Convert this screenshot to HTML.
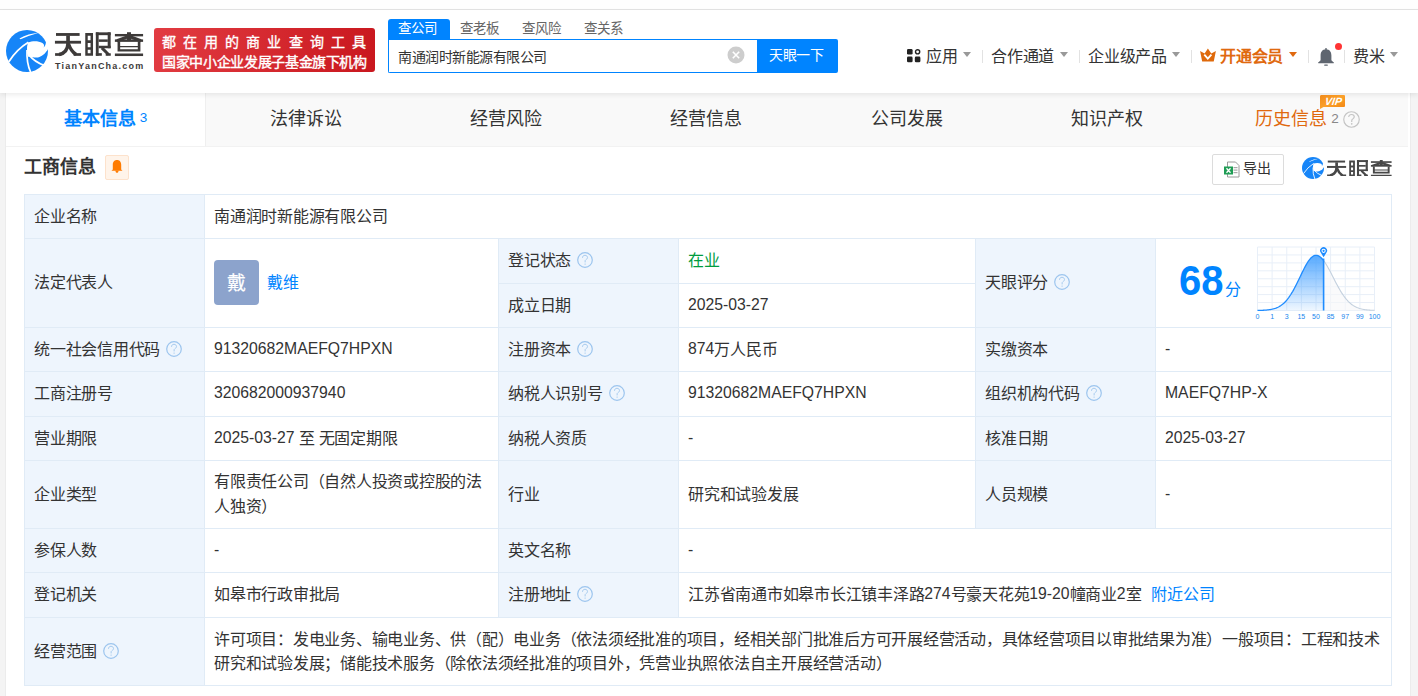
<!DOCTYPE html>
<html lang="zh-CN"><head><meta charset="utf-8"><style>
*{margin:0;padding:0;box-sizing:border-box}
html,body{width:1418px;height:696px;overflow:hidden}
body{background:#f4f4f4;font-family:"Liberation Sans",sans-serif;color:#333;position:relative}
.a{position:absolute;white-space:nowrap}
#topstrip{position:absolute;left:0;top:0;width:1418px;height:9px;background:#fefefe}
#topline{position:absolute;left:0;top:9px;width:1418px;height:1px;background:#e4e4e4}
#header{position:absolute;left:0;top:10px;width:1418px;height:83px;background:#fff;z-index:3;box-shadow:0 2px 5px rgba(0,0,0,0.08)}
.nav{font-size:16px;letter-spacing:-0.25px;line-height:20px;color:#333;top:37px}
.caret{position:absolute;width:0;height:0;border-left:4px solid transparent;border-right:4px solid transparent;border-top:5px solid #999}
.sep{position:absolute;width:1px;height:13px;background:#e2e2e2;top:40px}
#card{position:absolute;left:5px;top:93px;width:1406px;height:603px;background:#fff;border-left:1px solid #ececec;border-right:1px solid #ececec}
.tab{position:absolute;top:0;height:54px;background:#f9f9f9;font-size:18px;line-height:52px;text-align:center;color:#333;border-bottom:1px solid #f2f2f2;white-space:nowrap}
.tab.act{background:#fff;color:#0084ff;font-weight:bold;line-height:50px;border-right:1px solid #efefef}
.c{position:absolute;border-left:1px solid #e0ebf6;border-top:1px solid #e0ebf6;font-size:16px;letter-spacing:-0.25px;display:flex;align-items:center;padding-left:9px;color:#333;white-space:nowrap}
.c>div{line-height:20px}
.l{background:#eef5fd}
.d{font-size:15.75px;letter-spacing:0;position:relative;top:-1px}
.q{display:inline-block;width:16px;height:16px;margin-left:6px;vertical-align:-2px}
</style></head><body>
<div id="topstrip"></div><div id="topline"></div>
<div id="header">
<svg class="a" style="left:2px;top:16px" width="50" height="50" viewBox="0 0 50 50"><circle cx="25" cy="25" r="21" fill="#1685f8"/>
<path d="M17.4,12.4 Q26,7.6 36.8,6.8 Q27,9.6 18.6,13.3 Z" fill="#fff"/>
<path d="M6.8,35.8 Q14.5,23.5 26.4,16.3" fill="none" stroke="#fff" stroke-width="1.7"/>
<path d="M26.2,16.5 C30,15 36,14.6 40.4,16.9 C42.4,18 42.6,20.3 41.4,21.5 C42.8,20.8 43.8,18.6 43.9,16.3 L49,14 L49,23 L46,23 C45.6,24.2 45,25 44.5,25.3 C43,27.5 41.5,28.8 40.2,29.5 C38.5,30.8 36.5,31.6 34.5,31.6 C32,31.7 30,31.2 28.4,30.5 L26.4,31 L25.1,27 L25.3,25.5 C24.7,22.5 25,19 26.2,16.5 Z" fill="#fff"/>
<path d="M25.0,24 Q24.4,37 28.6,46" fill="none" stroke="#fff" stroke-width="1.7"/>
<path d="M27.6,29.6 Q32.5,35.6 42,39.4" fill="none" stroke="#fff" stroke-width="1.7"/></svg>
<svg class="a" style="left:50px;top:16px" width="100" height="34" viewBox="0 0 1418 482"><g fill="#3d3a39">
<rect x="85" y="100" width="335" height="40"/>
<rect x="70" y="210" width="370" height="40"/>
<rect x="230" y="135" width="52" height="120"/>
<rect x="72" y="385" width="90" height="38"/>
<rect x="335" y="385" width="105" height="38"/>
</g><g fill="none" stroke="#3d3a39" stroke-width="50">
<path d="M256,245 C252,320 210,385 130,404"/>
<path d="M262,255 C285,320 315,370 370,404"/>
</g><g fill="#3d3a39">
<path fill-rule="evenodd" d="M500,100 H610 V422 H500 Z M535,137 V203 H575 V137 Z M535,240 V300 H575 V240 Z M535,335 V387 H575 V335 Z"/>
<rect x="650" y="90" width="40" height="332"/>
<rect x="650" y="90" width="210" height="40"/>
<rect x="818" y="90" width="42" height="225"/>
<rect x="690" y="190" width="130" height="35"/>
<rect x="690" y="280" width="170" height="35"/>
<rect x="650" y="385" width="85" height="37"/>
<rect x="790" y="387" width="72" height="35"/>
</g><path d="M735,310 L830,405" stroke="#3d3a39" stroke-width="42" fill="none"/>
<g fill="#3d3a39">
<rect x="1092" y="88" width="56" height="110"/>
<rect x="920" y="113" width="400" height="34"/>
<rect x="920" y="190" width="400" height="35"/>
<path fill-rule="evenodd" d="M958,225 H1282 V362 H958 Z M995,225 V282 H1245 V225 Z M995,302 V328 H1245 V302 Z"/>
<rect x="920" y="390" width="400" height="36"/>
</g><g fill="none" stroke="#3d3a39" stroke-width="44">
<path d="M1105,152 L950,208"/><path d="M1135,152 L1290,208"/>
</g></svg>
<div class="a" style="left:55px;top:50px;font-size:9px;line-height:12px;font-weight:bold;color:#3d3a39;letter-spacing:1.22px">TianYanCha.com</div>
<div class="a" style="left:154px;top:18px;width:221px;height:44px;border-radius:3px;background:linear-gradient(100deg,#e23c42,#c9171e)"></div>
<div class="a" style="left:162px;top:23px;font-size:14px;line-height:18px;font-weight:normal;-webkit-text-stroke:0.35px #fff;color:#fff;letter-spacing:7.1px">都在用的商业查询工具</div>
<div class="a" style="left:162px;top:43px;font-size:14px;line-height:18px;font-weight:normal;-webkit-text-stroke:0.4px #fff;color:#fff;letter-spacing:-0.35px">国家中小企业发展子基金旗下机构</div>
<div class="a" style="left:388px;top:9px;width:62px;height:21px;background:#0084ff;border-radius:3px 3px 0 0"></div>
<div class="a" style="left:398px;top:10px;font-size:13.5px;line-height:18px;color:#fff">查公司</div>
<div class="a" style="left:460px;top:10px;font-size:13.5px;line-height:18px;color:#666">查老板</div>
<div class="a" style="left:522px;top:10px;font-size:13.5px;line-height:18px;color:#666">查风险</div>
<div class="a" style="left:584px;top:10px;font-size:13.5px;line-height:18px;color:#666">查关系</div>
<div class="a" style="left:388px;top:29px;width:370px;height:34px;border:1px solid #0084ff;border-right:none;background:#fff;border-radius:0 0 0 2px"></div>
<div class="a" style="left:398px;top:38px;font-size:14px;letter-spacing:-0.5px;line-height:18px;color:#333">南通润时新能源有限公司</div>
<svg class="a" style="left:727px;top:36px" width="18" height="18" viewBox="0 0 18 18"><circle cx="9" cy="9" r="8.5" fill="#cdcdcd"/><path d="M5.8,5.8 L12.2,12.2 M12.2,5.8 L5.8,12.2" stroke="#fff" stroke-width="1.6"/></svg>
<div class="a" style="left:757px;top:29px;width:81px;height:34px;background:#0084ff;border-radius:0 2px 2px 0"></div>
<div class="a" style="left:769px;top:36px;font-size:14px;letter-spacing:-0.4px;line-height:18px;color:#fff">天眼一下</div>
<svg class="a" style="left:907px;top:39px" width="14" height="14" viewBox="0 0 14 14">
<rect x="0" y="0" width="5.6" height="5.6" rx="1.3" fill="#222"/>
<circle cx="10.6" cy="2.8" r="2.1" fill="none" stroke="#222" stroke-width="1.4"/>
<rect x="0" y="7.6" width="5.6" height="5.6" rx="1.3" fill="#222"/>
<rect x="7.8" y="7.6" width="5.6" height="5.6" rx="1.3" fill="#222"/>
</svg>
<div class="a nav" style="left:926px;color:#333;font-weight:normal">应用</div>
<div class="caret" style="left:963px;top:42px;border-top-color:#999"></div>
<div class="sep" style="left:982px"></div>
<div class="a nav" style="left:991px;color:#333;font-weight:normal">合作通道</div>
<div class="caret" style="left:1060px;top:42px;border-top-color:#999"></div>
<div class="sep" style="left:1079px"></div>
<div class="a nav" style="left:1088px;color:#333;font-weight:normal">企业级产品</div>
<div class="caret" style="left:1172px;top:42px;border-top-color:#999"></div>
<div class="sep" style="left:1191px"></div>
<svg class="a" style="left:1199px;top:38px" width="18" height="15" viewBox="0 0 18 15">
<path d="M1.1,3 L5.6,5.6 L8.9,0.4 L12.3,5.6 L16.9,3 L14.8,13.2 Q14.6,13.6 14.2,13.6 L3.6,13.6 Q3.2,13.6 3.1,13.2 Z" fill="#df6a0c"/>
<path d="M5.3,6.6 L8.8,10.6 L12.4,6.6" fill="none" stroke="#fff" stroke-width="1.8"/>
</svg>
<div class="a nav" style="left:1220px;color:#e0690f;font-weight:bold">开通会员</div>
<div class="caret" style="left:1289px;top:42px;border-top-color:#e0690f"></div>
<div class="sep" style="left:1308px"></div>
<svg class="a" style="left:1317px;top:37px" width="18" height="20" viewBox="0 0 18 20">
<rect x="8.3" y="1" width="1.4" height="2" rx="0.6" fill="#5f6670"/>
<path d="M9,2.3 C5.2,2.3 3.6,5.3 3.6,8.4 L3.6,13.2 L1.6,15.3 L16.4,15.3 L14.4,13.2 L14.4,8.4 C14.4,5.3 12.8,2.3 9,2.3 Z" fill="#5f6670"/>
<rect x="1.2" y="15" width="15.6" height="1.2" rx="0.5" fill="#5f6670"/>
<rect x="7.2" y="17.4" width="3.6" height="1.3" rx="0.5" fill="#5f6670"/>
</svg>
<div class="a" style="left:1334.5px;top:32.5px;width:7.5px;height:7.5px;border-radius:50%;background:#ff3434"></div>
<div class="sep" style="left:1344px"></div>
<div class="a nav" style="left:1353px;color:#333;font-weight:normal">费米</div>
<div class="caret" style="left:1390px;top:42px;border-top-color:#999"></div>
</div>
<div id="card">
<div class="tab act" style="left:0.00px;width:200px">基本信息<span style="font-size:13.5px;font-weight:normal;margin-left:4px;vertical-align:3px">3</span></div>
<div class="tab" style="left:200.14px;width:200.14px">法律诉讼</div>
<div class="tab" style="left:400.29px;width:200.14px">经营风险</div>
<div class="tab" style="left:600.43px;width:200.14px">经营信息</div>
<div class="tab" style="left:800.57px;width:200.14px">公司发展</div>
<div class="tab" style="left:1000.71px;width:200.14px">知识产权</div>
<div class="tab" style="left:1200.86px;width:201.14px;color:#e0690f">历史信息<span style="font-size:13.5px;color:#888;margin-left:4px;vertical-align:2px">2</span><svg style="display:inline-block;vertical-align:-3px;margin-left:4px" width="17" height="17" viewBox="0 0 16 16"><circle cx="8" cy="8" r="7.3" fill="none" stroke="#c4c4c4" stroke-width="1.1"/><path d="M5.4,5.7 C5.4,4.1 6.6,3.3 8,3.3 C9.5,3.3 10.6,4.2 10.6,5.5 C10.6,6.9 9.1,7.3 8.3,8.4 L8.2,10.3" fill="none" stroke="#c4c4c4" stroke-width="1.1"/><circle cx="8.2" cy="12.1" r="0.8" fill="#c4c4c4"/></svg></div>
</div>
<svg class="a" style="left:1319px;top:95px;z-index:4" width="27" height="14" viewBox="0 0 27 14">
<defs><linearGradient id="vg" x1="0" y1="0" x2="1" y2="1"><stop offset="0" stop-color="#f08a1a"/><stop offset="0.5" stop-color="#fba02a"/><stop offset="1" stop-color="#f28410"/></linearGradient></defs>
<path d="M2,0 L25,0 Q26,0 26,1.2 L26,11 Q26,12 25,12 L4.5,12 L1,14 L1,1.5 Q1,0 2,0 Z" fill="url(#vg)"/>
<text x="14" y="10.2" font-family="Liberation Sans" font-size="10.5" font-weight="bold" font-style="italic" fill="#fff" text-anchor="middle" transform="skewX(-8) translate(1.5,0)">VIP</text>
</svg>
<div class="a" style="left:24px;top:155px;font-size:18px;line-height:24px;font-weight:bold;color:#333">工商信息</div>
<div class="a" style="left:105px;top:155px;width:24px;height:25px;background:#fff4ea;border:1px solid #fde2cc;border-radius:2px"></div>
<svg class="a" style="left:111px;top:159px" width="12" height="15" viewBox="0 0 12 15">
<path d="M6,1 C3,1 1.8,3.2 1.8,5.8 L1.8,10.6 L0.5,11.8 L11.5,11.8 L10.2,10.6 L10.2,5.8 C10.2,3.2 9,1 6,1 Z" fill="#ff7b00"/>
<path d="M4.3,11.5 L7.7,11.5 Q7.4,13.8 6,13.9 Q4.6,13.8 4.3,11.5 Z" fill="#ff7b00"/>
</svg>
<div class="a" style="left:1212px;top:154px;width:72px;height:31px;border:1px solid #dcdcdc;border-radius:2px;background:#fff"></div>
<svg class="a" style="left:1224px;top:161px" width="16" height="17" viewBox="0 0 16 17">
<path d="M3.5,1 L11.5,1 L15,4.5 L15,16 L3.5,16 Z" fill="#fff" stroke="#9a9a9a" stroke-width="1"/>
<rect x="9.5" y="6" width="4" height="1.2" fill="#aaa"/><rect x="9.5" y="8.5" width="4" height="1.2" fill="#aaa"/><rect x="9.5" y="11" width="4" height="1.2" fill="#aaa"/>
<rect x="0" y="5.5" width="9" height="8" fill="#1f9d55"/>
<path d="M2.5,7.3 L6.5,11.8 M6.5,7.3 L2.5,11.8" stroke="#fff" stroke-width="1.3"/>
</svg>
<div class="a" style="left:1243px;top:158px;font-size:14px;line-height:20px;color:#333">导出</div>
<svg class="a" style="left:1302px;top:157px" width="22" height="22" viewBox="4 4 42 42"><circle cx="25" cy="25" r="21" fill="#1685f8"/>
<path d="M17.4,12.4 Q26,7.6 36.8,6.8 Q27,9.6 18.6,13.3 Z" fill="#fff"/>
<path d="M6.8,35.8 Q14.5,23.5 26.4,16.3" fill="none" stroke="#fff" stroke-width="1.7"/>
<path d="M26.2,16.5 C30,15 36,14.6 40.4,16.9 C42.4,18 42.6,20.3 41.4,21.5 C42.8,20.8 43.8,18.6 43.9,16.3 L49,14 L49,23 L46,23 C45.6,24.2 45,25 44.5,25.3 C43,27.5 41.5,28.8 40.2,29.5 C38.5,30.8 36.5,31.6 34.5,31.6 C32,31.7 30,31.2 28.4,30.5 L26.4,31 L25.1,27 L25.3,25.5 C24.7,22.5 25,19 26.2,16.5 Z" fill="#fff"/>
<path d="M25.0,24 Q24.4,37 28.6,46" fill="none" stroke="#fff" stroke-width="1.7"/>
<path d="M27.6,29.6 Q32.5,35.6 42,39.4" fill="none" stroke="#fff" stroke-width="1.7"/></svg>
<svg class="a" style="left:1327.4px;top:159.7px" width="64.6" height="16.5" viewBox="70 88 1250 338" preserveAspectRatio="none"><g fill="#474747">
<rect x="85" y="100" width="335" height="40"/>
<rect x="70" y="210" width="370" height="40"/>
<rect x="230" y="135" width="52" height="120"/>
<rect x="72" y="385" width="90" height="38"/>
<rect x="335" y="385" width="105" height="38"/>
</g><g fill="none" stroke="#474747" stroke-width="50">
<path d="M256,245 C252,320 210,385 130,404"/>
<path d="M262,255 C285,320 315,370 370,404"/>
</g><g fill="#474747">
<path fill-rule="evenodd" d="M500,100 H610 V422 H500 Z M535,137 V203 H575 V137 Z M535,240 V300 H575 V240 Z M535,335 V387 H575 V335 Z"/>
<rect x="650" y="90" width="40" height="332"/>
<rect x="650" y="90" width="210" height="40"/>
<rect x="818" y="90" width="42" height="225"/>
<rect x="690" y="190" width="130" height="35"/>
<rect x="690" y="280" width="170" height="35"/>
<rect x="650" y="385" width="85" height="37"/>
<rect x="790" y="387" width="72" height="35"/>
</g><path d="M735,310 L830,405" stroke="#474747" stroke-width="42" fill="none"/>
<g fill="#474747">
<rect x="1092" y="88" width="56" height="110"/>
<rect x="920" y="113" width="400" height="34"/>
<rect x="920" y="190" width="400" height="35"/>
<path fill-rule="evenodd" d="M958,225 H1282 V362 H958 Z M995,225 V282 H1245 V225 Z M995,302 V328 H1245 V302 Z"/>
<rect x="920" y="390" width="400" height="36"/>
</g><g fill="none" stroke="#474747" stroke-width="44">
<path d="M1105,152 L950,208"/><path d="M1135,152 L1290,208"/>
</g></svg>
<div class="a" style="left:24px;top:194px;width:1368px;height:492px;border-right:1px solid #e0ebf6;border-bottom:1px solid #e0ebf6"></div>
<div class="c l" style="left:24px;top:194px;width:180px;height:44px;"><div>企业名称</div></div>
<div class="c" style="left:204px;top:194px;width:1187px;height:44px;"><div>南通润时新能源有限公司</div></div>
<div class="c l" style="left:24px;top:238px;width:180px;height:89px;"><div>法定代表人</div></div>
<div class="c" style="left:204px;top:238px;width:294px;height:89px;"><div></div></div>
<div class="a" style="left:214px;top:260px;width:45px;height:45px;border-radius:4px;background:#8ca3cc"></div>
<div class="a" style="left:214px;top:272px;width:45px;text-align:center;font-size:19px;line-height:24px;color:#fff;-webkit-text-stroke:0.2px #fff">戴</div>
<div class="a" style="left:267px;top:273px;font-size:16px;letter-spacing:-0.25px;line-height:20px;color:#0084ff">戴维</div>
<div class="c l" style="left:498px;top:238px;width:180px;height:45px;"><div>登记状态<svg class="q" width="16" height="16" viewBox="0 0 16 16"><circle cx="8" cy="8" r="7.3" fill="none" stroke="#9cc5ee" stroke-width="1.2"/><path d="M5.5,5.8 C5.5,4.1 6.6,3.3 8,3.3 C9.5,3.3 10.5,4.3 10.5,5.6 C10.5,6.9 9,7.4 8.2,8.5 L8.1,10.4" fill="none" stroke="#a6cbef" stroke-width="1"/><circle cx="8.1" cy="12.1" r="0.7" fill="#a6cbef"/></svg></div></div>
<div class="c" style="left:678px;top:238px;width:297px;height:45px;"><div><span style="color:#009c3e">在业</span></div></div>
<div class="c l" style="left:498px;top:283px;width:180px;height:44px;"><div>成立日期</div></div>
<div class="c" style="left:678px;top:283px;width:297px;height:44px;"><div><span class="d">2025-03-27</span></div></div>
<div class="c l" style="left:975px;top:238px;width:180px;height:89px;"><div>天眼评分<svg class="q" width="16" height="16" viewBox="0 0 16 16"><circle cx="8" cy="8" r="7.3" fill="none" stroke="#9cc5ee" stroke-width="1.2"/><path d="M5.5,5.8 C5.5,4.1 6.6,3.3 8,3.3 C9.5,3.3 10.5,4.3 10.5,5.6 C10.5,6.9 9,7.4 8.2,8.5 L8.1,10.4" fill="none" stroke="#a6cbef" stroke-width="1"/><circle cx="8.1" cy="12.1" r="0.7" fill="#a6cbef"/></svg></div></div>
<div class="c" style="left:1155px;top:238px;width:236px;height:89px;"><div></div></div>
<div class="c l" style="left:24px;top:327px;width:180px;height:44px;"><div>统一社会信用代码<svg class="q" width="16" height="16" viewBox="0 0 16 16"><circle cx="8" cy="8" r="7.3" fill="none" stroke="#9cc5ee" stroke-width="1.2"/><path d="M5.5,5.8 C5.5,4.1 6.6,3.3 8,3.3 C9.5,3.3 10.5,4.3 10.5,5.6 C10.5,6.9 9,7.4 8.2,8.5 L8.1,10.4" fill="none" stroke="#a6cbef" stroke-width="1"/><circle cx="8.1" cy="12.1" r="0.7" fill="#a6cbef"/></svg></div></div>
<div class="c" style="left:204px;top:327px;width:294px;height:44px;"><div><span class="d">91320682MAEFQ7HPXN</span></div></div>
<div class="c l" style="left:498px;top:327px;width:180px;height:44px;"><div>注册资本<svg class="q" width="16" height="16" viewBox="0 0 16 16"><circle cx="8" cy="8" r="7.3" fill="none" stroke="#9cc5ee" stroke-width="1.2"/><path d="M5.5,5.8 C5.5,4.1 6.6,3.3 8,3.3 C9.5,3.3 10.5,4.3 10.5,5.6 C10.5,6.9 9,7.4 8.2,8.5 L8.1,10.4" fill="none" stroke="#a6cbef" stroke-width="1"/><circle cx="8.1" cy="12.1" r="0.7" fill="#a6cbef"/></svg></div></div>
<div class="c" style="left:678px;top:327px;width:297px;height:44px;"><div><span class="d">874</span>万人民币</div></div>
<div class="c l" style="left:975px;top:327px;width:180px;height:44px;"><div>实缴资本</div></div>
<div class="c" style="left:1155px;top:327px;width:236px;height:44px;"><div><span class="d">-</span></div></div>
<div class="c l" style="left:24px;top:371px;width:180px;height:45px;"><div>工商注册号</div></div>
<div class="c" style="left:204px;top:371px;width:294px;height:45px;"><div><span class="d">320682000937940</span></div></div>
<div class="c l" style="left:498px;top:371px;width:180px;height:45px;"><div>纳税人识别号<svg class="q" width="16" height="16" viewBox="0 0 16 16"><circle cx="8" cy="8" r="7.3" fill="none" stroke="#9cc5ee" stroke-width="1.2"/><path d="M5.5,5.8 C5.5,4.1 6.6,3.3 8,3.3 C9.5,3.3 10.5,4.3 10.5,5.6 C10.5,6.9 9,7.4 8.2,8.5 L8.1,10.4" fill="none" stroke="#a6cbef" stroke-width="1"/><circle cx="8.1" cy="12.1" r="0.7" fill="#a6cbef"/></svg></div></div>
<div class="c" style="left:678px;top:371px;width:297px;height:45px;"><div><span class="d">91320682MAEFQ7HPXN</span></div></div>
<div class="c l" style="left:975px;top:371px;width:180px;height:45px;"><div>组织机构代码<svg class="q" width="16" height="16" viewBox="0 0 16 16"><circle cx="8" cy="8" r="7.3" fill="none" stroke="#9cc5ee" stroke-width="1.2"/><path d="M5.5,5.8 C5.5,4.1 6.6,3.3 8,3.3 C9.5,3.3 10.5,4.3 10.5,5.6 C10.5,6.9 9,7.4 8.2,8.5 L8.1,10.4" fill="none" stroke="#a6cbef" stroke-width="1"/><circle cx="8.1" cy="12.1" r="0.7" fill="#a6cbef"/></svg></div></div>
<div class="c" style="left:1155px;top:371px;width:236px;height:45px;"><div><span class="d">MAEFQ7HP-X</span></div></div>
<div class="c l" style="left:24px;top:416px;width:180px;height:44px;"><div>营业期限</div></div>
<div class="c" style="left:204px;top:416px;width:294px;height:44px;"><div><span class="d">2025-03-27</span> 至 无固定期限</div></div>
<div class="c l" style="left:498px;top:416px;width:180px;height:44px;"><div>纳税人资质</div></div>
<div class="c" style="left:678px;top:416px;width:297px;height:44px;"><div><span class="d">-</span></div></div>
<div class="c l" style="left:975px;top:416px;width:180px;height:44px;"><div>核准日期</div></div>
<div class="c" style="left:1155px;top:416px;width:236px;height:44px;"><div><span class="d">2025-03-27</span></div></div>
<div class="c l" style="left:24px;top:460px;width:180px;height:68px;"><div>企业类型</div></div>
<div class="c" style="left:204px;top:460px;width:294px;height:68px;"><div><div style="white-space:normal;line-height:25px;width:278px;margin-top:-1px">有限责任公司（自然人投资或控股的法人独资）</div></div></div>
<div class="c l" style="left:498px;top:460px;width:180px;height:68px;"><div>行业</div></div>
<div class="c" style="left:678px;top:460px;width:297px;height:68px;"><div>研究和试验发展</div></div>
<div class="c l" style="left:975px;top:460px;width:180px;height:68px;"><div>人员规模</div></div>
<div class="c" style="left:1155px;top:460px;width:236px;height:68px;"><div><span class="d">-</span></div></div>
<div class="c l" style="left:24px;top:528px;width:180px;height:44px;"><div>参保人数</div></div>
<div class="c" style="left:204px;top:528px;width:294px;height:44px;"><div><span class="d">-</span></div></div>
<div class="c l" style="left:498px;top:528px;width:180px;height:44px;"><div>英文名称</div></div>
<div class="c" style="left:678px;top:528px;width:713px;height:44px;"><div><span class="d">-</span></div></div>
<div class="c l" style="left:24px;top:572px;width:180px;height:45px;"><div>登记机关</div></div>
<div class="c" style="left:204px;top:572px;width:294px;height:45px;"><div>如皋市行政审批局</div></div>
<div class="c l" style="left:498px;top:572px;width:180px;height:45px;"><div>注册地址<svg class="q" width="16" height="16" viewBox="0 0 16 16"><circle cx="8" cy="8" r="7.3" fill="none" stroke="#9cc5ee" stroke-width="1.2"/><path d="M5.5,5.8 C5.5,4.1 6.6,3.3 8,3.3 C9.5,3.3 10.5,4.3 10.5,5.6 C10.5,6.9 9,7.4 8.2,8.5 L8.1,10.4" fill="none" stroke="#a6cbef" stroke-width="1"/><circle cx="8.1" cy="12.1" r="0.7" fill="#a6cbef"/></svg></div></div>
<div class="c" style="left:678px;top:572px;width:713px;height:45px;"><div>江苏省南通市如皋市长江镇丰泽路<span class="d">274</span>号豪天花苑<span class="d">19-20</span>幢商业<span class="d">2</span>室<span style="color:#0084ff;margin-left:10px">附近公司</span></div></div>
<div class="c l" style="left:24px;top:617px;width:180px;height:68px;"><div>经营范围<svg class="q" width="16" height="16" viewBox="0 0 16 16"><circle cx="8" cy="8" r="7.3" fill="none" stroke="#9cc5ee" stroke-width="1.2"/><path d="M5.5,5.8 C5.5,4.1 6.6,3.3 8,3.3 C9.5,3.3 10.5,4.3 10.5,5.6 C10.5,6.9 9,7.4 8.2,8.5 L8.1,10.4" fill="none" stroke="#a6cbef" stroke-width="1"/><circle cx="8.1" cy="12.1" r="0.7" fill="#a6cbef"/></svg></div></div>
<div class="c" style="left:204px;top:617px;width:1187px;height:68px;"><div><div style="white-space:normal;line-height:24px;width:1170px">许可项目：发电业务、输电业务、供（配）电业务（依法须经批准的项目，经相关部门批准后方可开展经营活动，具体经营项目以审批结果为准）一般项目：工程和技术研究和试验发展；储能技术服务（除依法须经批准的项目外，凭营业执照依法自主开展经营活动）</div></div></div>
<div class="a" style="left:1179px;top:255px;font-size:43px;line-height:50px;font-weight:bold;color:#0084ff;transform:scaleX(0.93);transform-origin:0 0">68</div>
<div class="a" style="left:1225px;top:280px;font-size:16px;line-height:20px;color:#0084ff">分</div>
<svg class="a" style="left:1250px;top:240px" width="135" height="85" viewBox="1250 240 135 85"><defs><linearGradient id="fg" x1="0" y1="0" x2="0" y2="1"><stop offset="0" stop-color="#3a9bff" stop-opacity="0.85"/><stop offset="1" stop-color="#3a9bff" stop-opacity="0.08"/></linearGradient></defs><line x1="1257.50" y1="247" x2="1257.50" y2="310.5" stroke="#e8eff8" stroke-width="1"/><line x1="1272.12" y1="247" x2="1272.12" y2="310.5" stroke="#e8eff8" stroke-width="1"/><line x1="1286.75" y1="247" x2="1286.75" y2="310.5" stroke="#e8eff8" stroke-width="1"/><line x1="1301.38" y1="247" x2="1301.38" y2="310.5" stroke="#e8eff8" stroke-width="1"/><line x1="1316.00" y1="247" x2="1316.00" y2="310.5" stroke="#e8eff8" stroke-width="1"/><line x1="1330.62" y1="247" x2="1330.62" y2="310.5" stroke="#e8eff8" stroke-width="1"/><line x1="1345.25" y1="247" x2="1345.25" y2="310.5" stroke="#e8eff8" stroke-width="1"/><line x1="1359.88" y1="247" x2="1359.88" y2="310.5" stroke="#e8eff8" stroke-width="1"/><line x1="1374.50" y1="247" x2="1374.50" y2="310.5" stroke="#e8eff8" stroke-width="1"/><line x1="1257.5" y1="247.00" x2="1374.5" y2="247.00" stroke="#e8eff8" stroke-width="1"/><line x1="1257.5" y1="254.94" x2="1374.5" y2="254.94" stroke="#e8eff8" stroke-width="1"/><line x1="1257.5" y1="262.88" x2="1374.5" y2="262.88" stroke="#e8eff8" stroke-width="1"/><line x1="1257.5" y1="270.81" x2="1374.5" y2="270.81" stroke="#e8eff8" stroke-width="1"/><line x1="1257.5" y1="278.75" x2="1374.5" y2="278.75" stroke="#e8eff8" stroke-width="1"/><line x1="1257.5" y1="286.69" x2="1374.5" y2="286.69" stroke="#e8eff8" stroke-width="1"/><line x1="1257.5" y1="294.62" x2="1374.5" y2="294.62" stroke="#e8eff8" stroke-width="1"/><line x1="1257.5" y1="302.56" x2="1374.5" y2="302.56" stroke="#e8eff8" stroke-width="1"/><line x1="1257.5" y1="310.50" x2="1374.5" y2="310.50" stroke="#e8eff8" stroke-width="1"/><path d="M1257.50,310.43 L1258.47,310.41 L1259.45,310.39 L1260.42,310.37 L1261.40,310.34 L1262.38,310.30 L1263.35,310.25 L1264.33,310.20 L1265.30,310.14 L1266.28,310.06 L1267.25,309.97 L1268.22,309.86 L1269.20,309.73 L1270.17,309.59 L1271.15,309.41 L1272.12,309.21 L1273.10,308.98 L1274.08,308.72 L1275.05,308.41 L1276.03,308.07 L1277.00,307.67 L1277.97,307.22 L1278.95,306.72 L1279.92,306.15 L1280.90,305.52 L1281.88,304.82 L1282.85,304.05 L1283.83,303.19 L1284.80,302.25 L1285.78,301.23 L1286.75,300.12 L1287.72,298.92 L1288.70,297.62 L1289.67,296.24 L1290.65,294.77 L1291.62,293.20 L1292.60,291.56 L1293.58,289.83 L1294.55,288.03 L1295.53,286.16 L1296.50,284.23 L1297.47,282.26 L1298.45,280.25 L1299.42,278.22 L1300.40,276.18 L1301.38,274.15 L1302.35,272.14 L1303.33,270.17 L1304.30,268.25 L1305.28,266.41 L1306.25,264.65 L1307.22,263.01 L1308.20,261.48 L1309.17,260.10 L1310.15,258.87 L1311.12,257.80 L1312.10,256.92 L1313.08,256.21 L1314.05,255.71 L1315.03,255.40 L1316.00,255.30 L1316.97,255.39 L1317.95,255.66 L1318.92,256.11 L1319.90,256.73 L1320.88,257.52 L1321.85,258.47 L1322.83,259.57 L1323.60,260.55 L1323.6,310.5 L1257.5,310.5 Z" fill="url(#fg)"/><path d="M1257.50,310.43 L1258.47,310.41 L1259.45,310.39 L1260.42,310.37 L1261.40,310.34 L1262.38,310.30 L1263.35,310.25 L1264.33,310.20 L1265.30,310.14 L1266.28,310.06 L1267.25,309.97 L1268.22,309.86 L1269.20,309.73 L1270.17,309.59 L1271.15,309.41 L1272.12,309.21 L1273.10,308.98 L1274.08,308.72 L1275.05,308.41 L1276.03,308.07 L1277.00,307.67 L1277.97,307.22 L1278.95,306.72 L1279.92,306.15 L1280.90,305.52 L1281.88,304.82 L1282.85,304.05 L1283.83,303.19 L1284.80,302.25 L1285.78,301.23 L1286.75,300.12 L1287.72,298.92 L1288.70,297.62 L1289.67,296.24 L1290.65,294.77 L1291.62,293.20 L1292.60,291.56 L1293.58,289.83 L1294.55,288.03 L1295.53,286.16 L1296.50,284.23 L1297.47,282.26 L1298.45,280.25 L1299.42,278.22 L1300.40,276.18 L1301.38,274.15 L1302.35,272.14 L1303.33,270.17 L1304.30,268.25 L1305.28,266.41 L1306.25,264.65 L1307.22,263.01 L1308.20,261.48 L1309.17,260.10 L1310.15,258.87 L1311.12,257.80 L1312.10,256.92 L1313.08,256.21 L1314.05,255.71 L1315.03,255.40 L1316.00,255.30 L1316.97,255.39 L1317.95,255.66 L1318.92,256.11 L1319.90,256.73 L1320.88,257.52 L1321.85,258.47 L1322.83,259.57 L1323.60,260.55" fill="none" stroke="#1f8cff" stroke-width="1.3"/><path d="M1323.60,260.55 L1323.80,260.81 L1324.78,262.18 L1325.75,263.67 L1326.72,265.26 L1327.70,266.94 L1328.67,268.70 L1329.65,270.51 L1330.62,272.37 L1331.60,274.27 L1332.58,276.18 L1333.55,278.10 L1334.53,280.02 L1335.50,281.91 L1336.47,283.77 L1337.45,285.60 L1338.42,287.37 L1339.40,289.09 L1340.38,290.75 L1341.35,292.34 L1342.33,293.86 L1343.30,295.30 L1344.28,296.66 L1345.25,297.94 L1346.22,299.14 L1347.20,300.25 L1348.17,301.29 L1349.15,302.25 L1350.12,303.14 L1351.10,303.95 L1352.08,304.69 L1353.05,305.37 L1354.03,305.98 L1355.00,306.53 L1355.97,307.02 L1356.95,307.47 L1357.92,307.86 L1358.90,308.21 L1359.88,308.53 L1360.85,308.80 L1361.83,309.04 L1362.80,309.25 L1363.78,309.44 L1364.75,309.60 L1365.72,309.73 L1366.70,309.85 L1367.67,309.96 L1368.65,310.04 L1369.62,310.12 L1370.60,310.18 L1371.58,310.24 L1372.55,310.28 L1373.53,310.32 L1374.50,310.35 L1374.5,310.5 L1323.6,310.5 Z" fill="#f6f7f9" fill-opacity="0.6"/><path d="M1323.60,260.55 L1323.80,260.81 L1324.78,262.18 L1325.75,263.67 L1326.72,265.26 L1327.70,266.94 L1328.67,268.70 L1329.65,270.51 L1330.62,272.37 L1331.60,274.27 L1332.58,276.18 L1333.55,278.10 L1334.53,280.02 L1335.50,281.91 L1336.47,283.77 L1337.45,285.60 L1338.42,287.37 L1339.40,289.09 L1340.38,290.75 L1341.35,292.34 L1342.33,293.86 L1343.30,295.30 L1344.28,296.66 L1345.25,297.94 L1346.22,299.14 L1347.20,300.25 L1348.17,301.29 L1349.15,302.25 L1350.12,303.14 L1351.10,303.95 L1352.08,304.69 L1353.05,305.37 L1354.03,305.98 L1355.00,306.53 L1355.97,307.02 L1356.95,307.47 L1357.92,307.86 L1358.90,308.21 L1359.88,308.53 L1360.85,308.80 L1361.83,309.04 L1362.80,309.25 L1363.78,309.44 L1364.75,309.60 L1365.72,309.73 L1366.70,309.85 L1367.67,309.96 L1368.65,310.04 L1369.62,310.12 L1370.60,310.18 L1371.58,310.24 L1372.55,310.28 L1373.53,310.32 L1374.50,310.35" fill="none" stroke="#c3d0de" stroke-width="1.1"/><line x1="1323.6" y1="258.54951786325324" x2="1323.6" y2="310.5" stroke="#1f8cff" stroke-width="1.6"/><path d="M1323.6,257.2 L1320.6999999999998,252.6 A3.5,3.5 0 1 1 1326.5,252.6 Z" fill="#1f8cff"/><circle cx="1323.6" cy="250.8" r="2.1" fill="#fff"/><circle cx="1323.6" cy="250.8" r="1.1" fill="#1f8cff"/><text x="1257.50" y="319" font-family="Liberation Sans" font-size="7" fill="#2086ee" text-anchor="middle">0</text><text x="1272.12" y="319" font-family="Liberation Sans" font-size="7" fill="#2086ee" text-anchor="middle">1</text><text x="1286.75" y="319" font-family="Liberation Sans" font-size="7" fill="#2086ee" text-anchor="middle">3</text><text x="1301.38" y="319" font-family="Liberation Sans" font-size="7" fill="#2086ee" text-anchor="middle">15</text><text x="1316.00" y="319" font-family="Liberation Sans" font-size="7" fill="#2086ee" text-anchor="middle">50</text><text x="1330.62" y="319" font-family="Liberation Sans" font-size="7" fill="#2086ee" text-anchor="middle">85</text><text x="1345.25" y="319" font-family="Liberation Sans" font-size="7" fill="#2086ee" text-anchor="middle">97</text><text x="1359.88" y="319" font-family="Liberation Sans" font-size="7" fill="#2086ee" text-anchor="middle">99</text><text x="1374.50" y="319" font-family="Liberation Sans" font-size="7" fill="#2086ee" text-anchor="middle">100</text></svg>
</body></html>
